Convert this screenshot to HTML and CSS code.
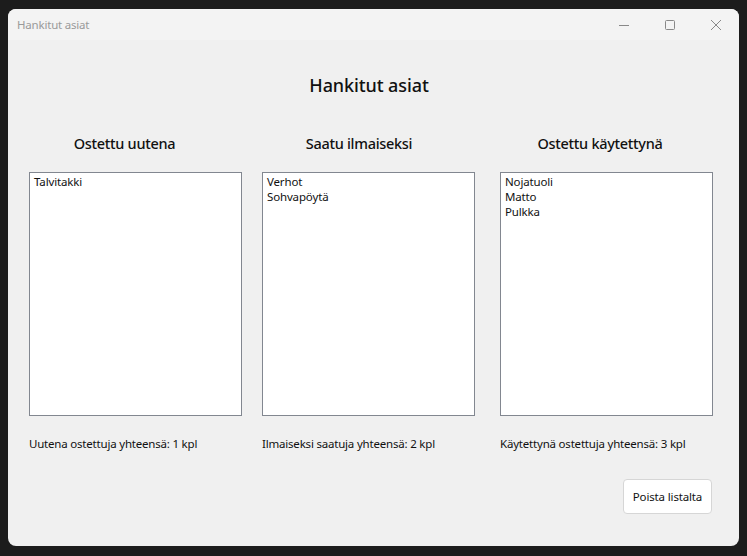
FILE: index.html
```html
<!DOCTYPE html>
<html lang="fi">
<head>
<meta charset="utf-8">
<title>Hankitut asiat</title>
<link rel="stylesheet" href="styles.css">
</head>
<body>
<div class="window">
  <div class="titlebar">
    <span class="title">Hankitut asiat</span>
    <div class="controls">
      <span class="ctl"><svg width="10" height="10" viewBox="0 0 10 10"><path d="M0 5.5H10" stroke="#888" stroke-width="1"/></svg></span>
      <span class="ctl"><svg width="10" height="10" viewBox="0 0 10 10"><rect x="0.5" y="0.5" width="9" height="9" rx="1" fill="none" stroke="#888" stroke-width="1"/></svg></span>
      <span class="ctl"><svg width="10" height="10" viewBox="0 0 10 10"><path d="M0 0L10 10M10 0L0 10" stroke="#888" stroke-width="1"/></svg></span>
    </div>
  </div>
  <div class="content">
    <h1 class="heading">Hankitut asiat</h1>
    <div class="columns">
      <div class="col col-1">
        <h2 class="col-title">Ostettu uutena</h2>
        <div class="listbox">
          <div class="item">Talvitakki</div>
        </div>
        <p class="total">Uutena ostettuja yhteensä: 1 kpl</p>
      </div>
      <div class="col col-2">
        <h2 class="col-title">Saatu ilmaiseksi</h2>
        <div class="listbox">
          <div class="item">Verhot</div>
          <div class="item">Sohvapöytä</div>
        </div>
        <p class="total">Ilmaiseksi saatuja yhteensä: 2 kpl</p>
      </div>
      <div class="col col-3">
        <h2 class="col-title">Ostettu käytettynä</h2>
        <div class="listbox">
          <div class="item">Nojatuoli</div>
          <div class="item">Matto</div>
          <div class="item">Pulkka</div>
        </div>
        <p class="total">Käytettynä ostettuja yhteensä: 3 kpl</p>
      </div>
    </div>
    <div class="actions">
      <button class="btn">Poista listalta</button>
    </div>
  </div>
</div>
</body>
</html>
```

FILE: styles.css
```css
* { box-sizing: border-box; }
html, body {
  margin: 0;
  padding: 0;
  background: #1c1c1c;
  width: 747px;
  height: 556px;
  overflow: hidden;
  font-family: "Noto Sans", "Open Sans", sans-serif;
}
.window {
  margin: 9px 0 0 8px;
  width: 731px;
  height: 537px;
  border-radius: 8px;
  background: #f0f0f0;
  overflow: hidden;
  display: flex;
  flex-direction: column;
}
.titlebar {
  height: 31px;
  background: #f3f3f3;
  display: flex;
  align-items: center;
  justify-content: space-between;
}
.title {
  padding-left: 9px;
  font-size: 11.5px;
  color: #9a9a9a;
  letter-spacing: -0.2px;
}
.controls {
  display: flex;
  height: 100%;
}
.ctl {
  width: 46px;
  display: flex;
  align-items: center;
  justify-content: center;
}
.content {
  flex: 1;
  display: flex;
  flex-direction: column;
}
.heading {
  margin: 32px 0 0 0;
  font-size: 18px;
  line-height: 26px;
  font-weight: 500;
  color: #111;
  text-align: center;
  padding-right: 9px;
  letter-spacing: -0.1px;
}
.columns {
  display: flex;
  padding-left: 21px;
  margin-top: 35px;
}
.col {
  width: 213px;
  display: flex;
  flex-direction: column;
}
.col-2 { margin-left: 20px; }
.col-3 { margin-left: 25px; }
.col-title {
  margin: 0;
  font-size: 14.5px;
  line-height: 20px;
  font-weight: 500;
  color: #111;
  text-align: center;
  letter-spacing: -0.3px;
}
.col-1 .col-title { padding-right: 22px; }
.col-2 .col-title { padding-right: 19px; }
.col-3 .col-title { padding-right: 13px; }
.listbox {
  margin-top: 19px;
  height: 244px;
  background: #fff;
  border: 1px solid #828790;
  padding: 1px 4px;
}
.item {
  font-size: 11.5px;
  line-height: 15px;
  color: #111;
  letter-spacing: -0.15px;
}
.total {
  margin: 20px 0 0 0;
  font-size: 11.5px;
  line-height: 15px;
  color: #111;
  letter-spacing: -0.2px;
  white-space: nowrap;
}
.actions {
  display: flex;
  justify-content: flex-end;
  padding-right: 27px;
  margin-top: 28px;
}
.btn {
  width: 89px;
  height: 35px;
  background: #fff;
  border: 1px solid #d6d6d6;
  border-radius: 4px;
  font-family: inherit;
  font-size: 11.5px;
  color: #111;
  padding: 0;
  letter-spacing: -0.15px;
}
```
